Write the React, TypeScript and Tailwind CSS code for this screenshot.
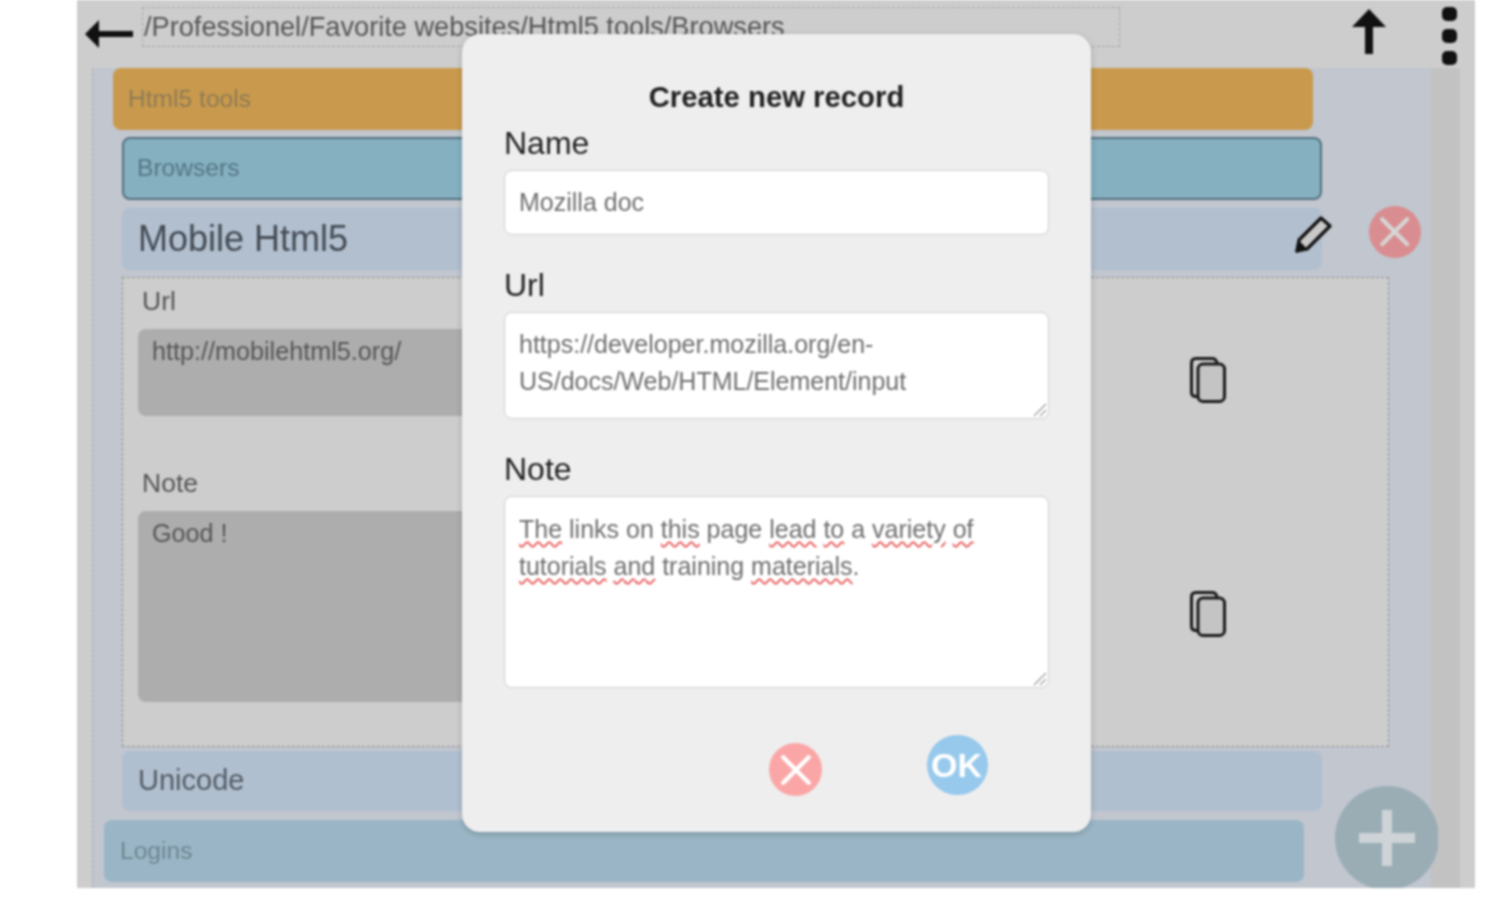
import type { ReactNode } from 'react';

const font = "font-['Liberation_Sans',Arial,sans-serif]";

function CrossButton({ className }: { className: string }) {
  return (
    <span className={`flex items-center justify-center rounded-full ${className}`}>
      <svg viewBox="0 0 24 24" className="h-[64%] w-[64%]" fill="none" stroke="currentColor" strokeWidth="3" strokeLinecap="round">
        <path d="M3 3 21 21M21 3 3 21" />
      </svg>
    </span>
  );
}

function CopyIcon() {
  return (
    <svg viewBox="0 0 36 46" className="h-[46px] w-[36px]" fill="none" stroke="#1a1a1a" strokeWidth="3">
      <path d="M8 39.5H6C3 39.5 1.5 38 1.5 35V6C1.5 3 3 1.5 6 1.5H22C24.5 1.5 26.5 3 27 6" />
      <rect x="8" y="7" width="26.5" height="37.5" rx="5" fill="#c4c4c4" />
    </svg>
  );
}

function Grip() {
  return (
    <svg viewBox="0 0 14 14" className="absolute right-[1px] bottom-[1px] h-[14px] w-[14px]" stroke="#9a9a9a" strokeWidth="1.2">
      <path d="M1 13 13 1M7 13l6-6" />
    </svg>
  );
}

function Miss({ children }: { children: ReactNode }) {
  return <span className="underline decoration-[#e85c5c] decoration-wavy decoration-[1.5px] underline-offset-[3px]">{children}</span>;
}

function Row({ className, text }: { className: string; text: string }) {
  return <div className={`flex items-center rounded-[8px] ${className}`}>{text}</div>;
}

function Field({ label, className, children }: { label: string; className: string; children: ReactNode }) {
  return (
    <div>
      <div className="text-[32px] leading-[36px] text-[#222]">{label}</div>
      <div className={`relative mt-[9px] rounded-[8px] border border-[#cfcfcf] bg-white pl-[14px] text-[25px] leading-[37px] text-[#6f6f6f] ${className}`}>
        {children}
      </div>
    </div>
  );
}

function Modal() {
  return (
    <div className="absolute top-[34px] left-[385px] h-[798px] w-[629px] rounded-[18px] bg-[#eeeeee] px-[42px] pt-[45px] shadow-[0_2px_6px_rgba(0,0,0,0.2)]">
      <div className="text-center text-[29.3px] leading-[36px] font-bold text-[#222]">Create new record</div>
      <div className="mt-[10px] flex flex-col">
        <Field label="Name" className="flex h-[65px] items-center">
          Mozilla doc
        </Field>
        <div className="mt-[32px]">
          <Field label="Url" className="h-[107px] pt-[13px]">
            https://developer.mozilla.org/en-
            <br />
            US/docs/Web/HTML/Element/input
            <Grip />
          </Field>
        </div>
        <div className="mt-[32px]">
          <Field label="Note" className="h-[192px] pt-[14px]">
            <Miss>The</Miss> links on <Miss>this</Miss> page <Miss>lead</Miss> <Miss>to</Miss> a <Miss>variety</Miss> <Miss>of</Miss>
            <br />
            <Miss>tutorials</Miss> <Miss>and</Miss> training <Miss>materials</Miss>.
            <Grip />
          </Field>
        </div>
      </div>
      <div className="mt-[47px] flex items-start pl-[265px]">
        <CrossButton className="mt-[8px] h-[53px] w-[53px] bg-[#fba6a6] text-white" />
        <span className="ml-[105px] flex h-[60px] w-[61px] items-center justify-center rounded-full bg-[#97c9ec] pr-[2px] text-[34px] font-bold text-white">
          OK
        </span>
      </div>
    </div>
  );
}

export default function App() {
  return (
    <div className={`h-[900px] w-[1501px] overflow-hidden bg-white pr-[26px] pl-[77px] ${font} blur-[0.8px]`}>
      <div className="relative h-[888px] overflow-hidden bg-[#cdcdcd]">
        {/* barre du haut */}
        <div className="flex h-[68px] items-start">
          <svg viewBox="0 0 50 30" className="mt-[19px] ml-[8px] h-[30px] w-[50px]" fill="#111">
            <path d="M0 15 14 1v11h34v6H14v11z" />
          </svg>
          <div className="mt-[7px] ml-[7px] h-[40px] w-[978px] overflow-hidden border border-dashed border-[#a5a5a5] pl-[1px] text-[27.2px] leading-[38px] whitespace-nowrap text-[#555]">
            /Professionel/Favorite websites/Html5 tools/Browsers
          </div>
          <svg viewBox="0 0 34 46" className="mt-[9px] ml-[232px] h-[46px] w-[34px]" fill="#111">
            <path d="M17 0 34 18H21v27h-8V18H0z" />
          </svg>
          <div className="mt-[7px] ml-[56px] flex flex-col gap-[8px]">
            <span className="h-[14px] w-[15px] rounded-[5px] bg-[#111]" />
            <span className="h-[14px] w-[15px] rounded-[5px] bg-[#111]" />
            <span className="h-[14px] w-[15px] rounded-[5px] bg-[#111]" />
          </div>
        </div>

        {/* liste */}
        <div className="mx-[15px] flex h-[820px] border-l border-dashed border-[#a9a9a9] bg-[#c1c6cf]">
          <div className="min-w-0 flex-1 text-[#555]">
            <Row className="ml-[20px] h-[62px] w-[1200px] bg-[#c99a4d] pl-[15px] text-[24.6px] text-[#8e7a55]" text="Html5 tools" />
            <Row className="mt-[7px] ml-[29px] h-[63px] w-[1200px] border-2 border-[#54707f] bg-[#85b0c0] pl-[13px] text-[24.6px] text-[#557684]" text="Browsers" />
            <div className="mt-[8px] ml-[29px] flex h-[62px] items-start">
              <Row className="h-full w-[1200px] bg-[#b1bfcf] pl-[16px] text-[36px] text-[#454b54]" text="Mobile Html5" />
              <svg viewBox="0 0 38 38" className="mt-[7px] ml-[-28px] h-[38px] w-[38px]" fill="#c9c9c9" stroke="#111" strokeWidth="3.2" strokeLinejoin="round">
                <path d="M27 3 36 11 13 34 3 36 5 25z" />
                <path d="M3 36 5 28 10 33z" fill="#111" />
              </svg>
              <CrossButton className="mt-[-2px] ml-[37px] h-[52px] w-[52px] bg-[#d98d90] text-[#d6d6d6]" />
            </div>
            <div className="mt-[7px] ml-[29px] flex h-[470px] w-[1267px] border border-dashed border-[#8f8f8f] bg-[#cdcdcd] pt-[8px] pl-[15px]">
              <div className="w-[900px]">
                <div className="pl-[4px] text-[26.5px] leading-[30px]">Url</div>
                <div className="mt-[13px] h-[87px] rounded-[8px] bg-[#adadad] px-[14px] pt-[4px] text-[25.2px] leading-[36px]">
                  http://mobilehtml5.org/
                </div>
                <div className="mt-[52px] pl-[4px] text-[26.5px] leading-[30px]">Note</div>
                <div className="mt-[13px] h-[191px] rounded-[8px] bg-[#adadad] px-[14px] pt-[4px] text-[25.2px] leading-[36px]">
                  Good !
                </div>
              </div>
              <div className="ml-[152px] flex flex-col">
                <div className="mt-[71px]">
                  <CopyIcon />
                </div>
                <div className="mt-[188px]">
                  <CopyIcon />
                </div>
              </div>
            </div>
            <Row className="mt-[4px] ml-[29px] h-[60px] w-[1200px] bg-[#b0bfcf] pl-[16px] text-[29px] text-[#555c66]" text="Unicode" />
            <Row className="mt-[9px] ml-[11px] h-[62px] w-[1200px] bg-[#9ab6c6] pl-[16px] text-[24.6px] text-[#6f8591]" text="Logins" />
          </div>
          <div className="h-full w-[29px] bg-[#c2c2c2]" />
        </div>

        {/* bouton ajouter */}
        <div className="absolute top-[786px] left-[1258px] w-[103px] overflow-hidden">
          <div className="flex h-[104px] w-[104px] items-center justify-center rounded-full bg-[#9aadb5]">
            <svg viewBox="0 0 56 56" className="h-[56px] w-[56px]" fill="#cdd3d6">
              <path d="M23 0h10v23h23v10H33v23H23V33H0V23h23z" />
            </svg>
          </div>
        </div>

        <Modal />
      </div>
    </div>
  );
}
